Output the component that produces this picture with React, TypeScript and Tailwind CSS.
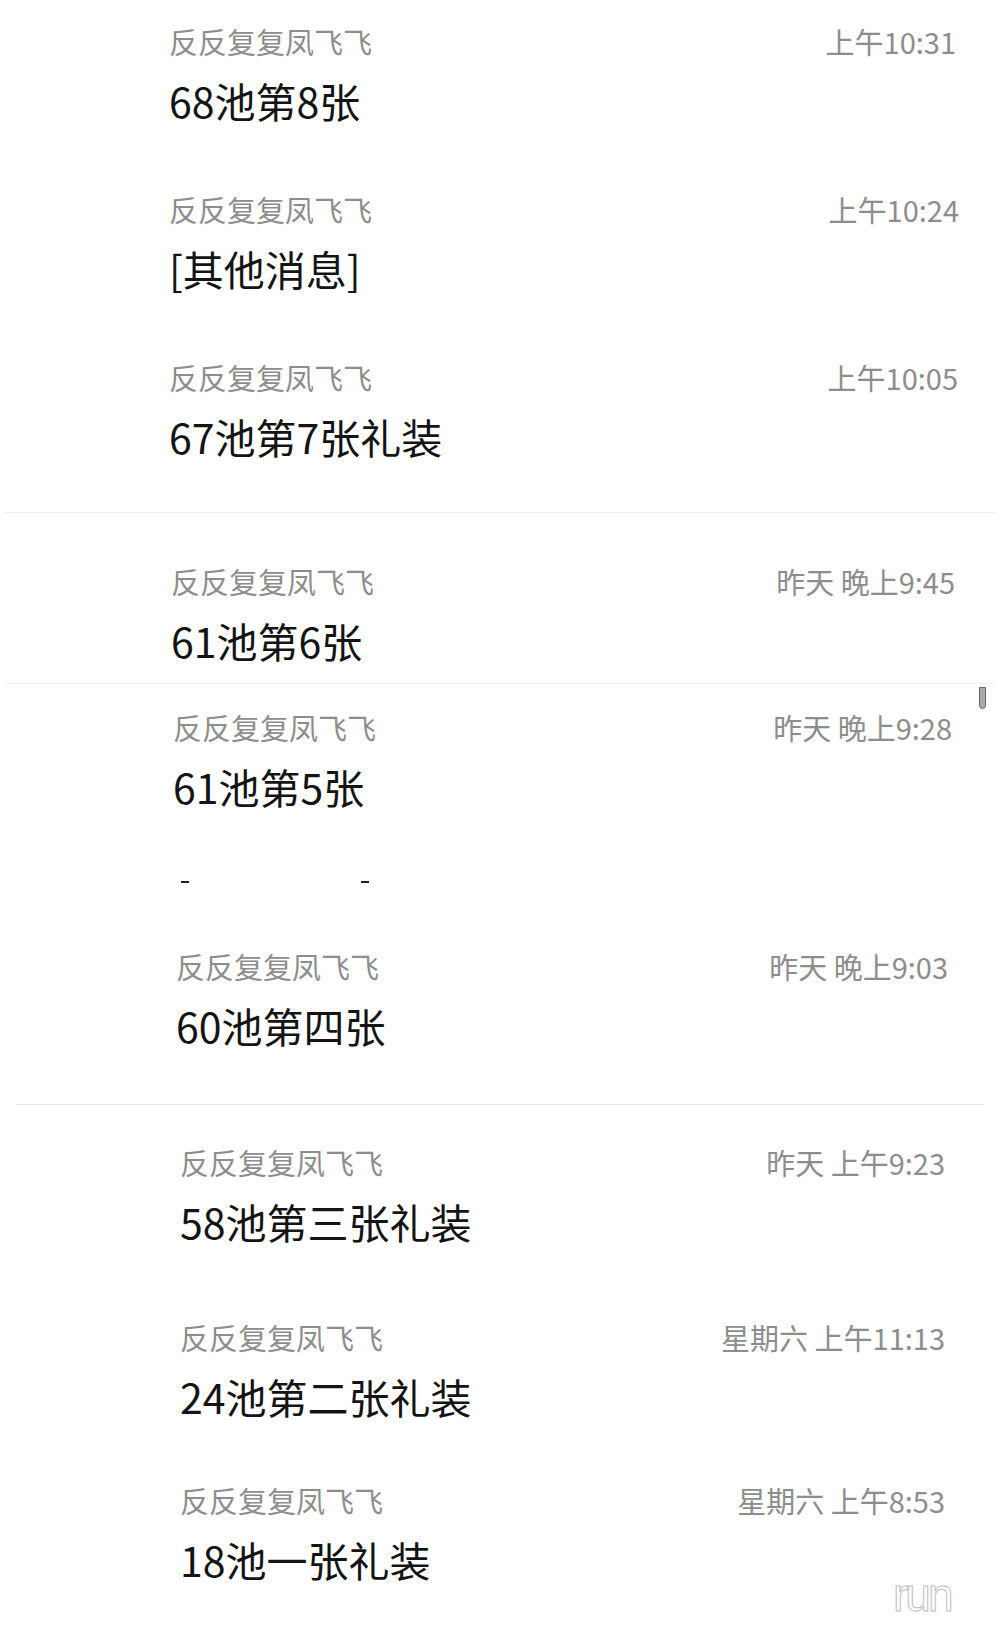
const NAME = "反反复复凤飞飞";

interface ItemProps {
  time: string;
  msg: string;
  pad: string;
}

function ChatItem({ time, msg, pad }: ItemProps) {
  return (
    <div className={pad}>
      <div className="flex h-10 items-center justify-between text-[29px] text-[#8d8d8d]">
        <span>{NAME}</span>
        <span>{time}</span>
      </div>
      <div className="mt-[11px] flex h-14 items-center text-[41px] text-[#141414]">{msg}</div>
    </div>
  );
}

export default function App() {
  return (
    <div
      className="relative w-full overflow-hidden bg-white"
      style={{ fontFamily: '"Noto Sans CJK SC", "Noto Sans", sans-serif' }}
    >
      {/* today */}
      <section className="flex flex-col gap-[61px] pt-[22px] pb-[47px]">
        <ChatItem pad="pl-[169px] pr-[44px]" time="上午10:31" msg="68池第8张" />
        <ChatItem pad="pl-[169px] pr-[41px]" time="上午10:24" msg="[其他消息]" />
        <ChatItem pad="pl-[169px] pr-[42px]" time="上午10:05" msg="67池第7张礼装" />
      </section>
      <div className="mx-[4px] h-px bg-[#eeeeee]" />

      <section className="pt-[49px] pb-[14px]">
        <ChatItem pad="pl-[171px] pr-[45px]" time="昨天 晚上9:45" msg="61池第6张" />
      </section>
      <div className="mx-[5px] h-px bg-[#f0f0f0]" />

      <section className="pt-[24px] pb-[50px]">
        <ChatItem pad="pl-[173px] pr-[48px]" time="昨天 晚上9:28" msg="61池第5张" />
        <div className="mt-[66px] flex h-[2px] pl-[181px]">
          <div className="w-[8px] bg-[#222]" />
          <div className="ml-[172px] w-[8px] bg-[#222]" />
        </div>
        <div className="mt-[64px]">
          <ChatItem pad="pl-[176px] pr-[52px]" time="昨天 晚上9:03" msg="60池第四张" />
        </div>
      </section>
      <div className="ml-[16px] mr-[17px] h-px bg-[#e4e4e4]" />

      <section className="pt-[38px] pb-[38px]">
        <ChatItem pad="pl-[180px] pr-[55px]" time="昨天 上午9:23" msg="58池第三张礼装" />
        <div className="mt-[68px]">
          <ChatItem pad="pl-[180px] pr-[55px]" time="星期六 上午11:13" msg="24池第二张礼装" />
        </div>
        <div className="mt-[56px]">
          <ChatItem pad="pl-[180px] pr-[55px]" time="星期六 上午8:53" msg="18池一张礼装" />
        </div>
      </section>

      {/* scrollbar thumb */}
      <div className="absolute left-[979px] top-[687px] h-[22px] w-[7px] rounded-b-full border border-[#666] bg-[#aaa]" />

      {/* watermark */}
      <span
        className="absolute left-[893px] top-[1572px] text-[46px] leading-none tracking-[-3px] text-transparent [-webkit-text-stroke:1px_#bdbdbd]"
        style={{ fontFamily: '"Liberation Sans", sans-serif' }}
      >
        run
      </span>
    </div>
  );
}
